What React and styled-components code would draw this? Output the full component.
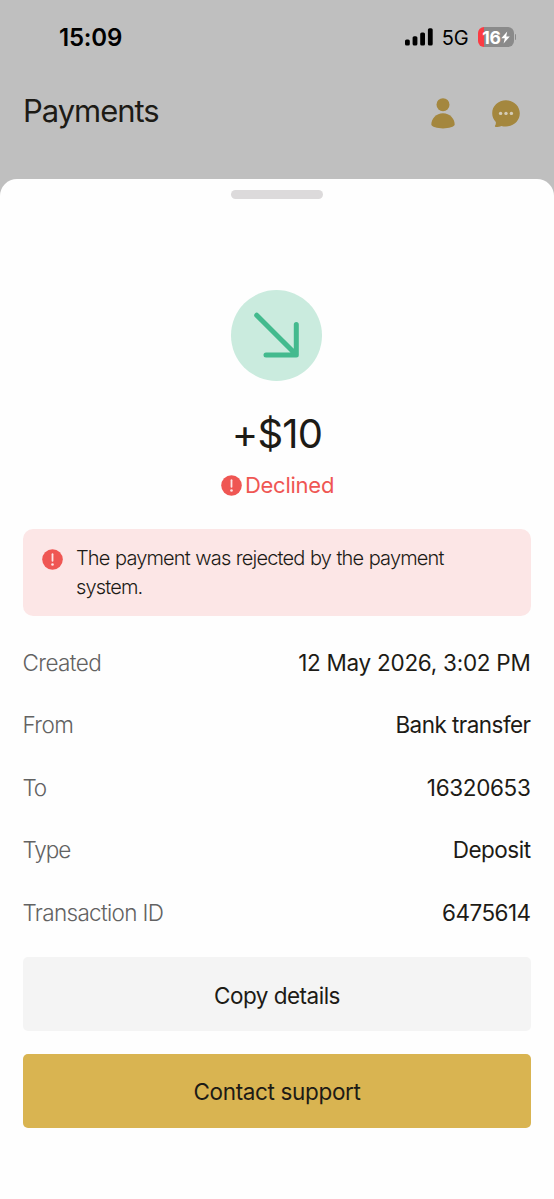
import React from "react";
import styled, { createGlobalStyle } from "styled-components";

const details = [
  { label: "Created", value: "12 May 2026, 3:02 PM", labelGap: -0.6, valueGap: -0.27 },
  { label: "From", value: "Bank transfer", labelGap: -0.6, valueGap: -0.55 },
  { label: "To", value: "16320653", labelGap: -1.2, valueGap: -0.35 },
  { label: "Type", value: "Deposit", labelGap: -1.1, valueGap: -0.5 },
  { label: "Transaction ID", value: "6475614", labelGap: -0.68, valueGap: -0.55 },
];

const SignalIcon = () => (
  <svg width="28" height="18" viewBox="0 0 28 18" fill="#000">
    <rect x="0" y="11.5" width="4.8" height="6" rx="1.6" />
    <rect x="7.6" y="8.2" width="4.8" height="9.3" rx="1.6" />
    <rect x="15.2" y="4.4" width="4.8" height="13.1" rx="1.6" />
    <rect x="22.9" y="0.2" width="4.8" height="17.3" rx="1.6" />
  </svg>
);

const BoltIcon = () => (
  <svg width="9" height="13" viewBox="0 0 9 13" fill="#fff">
    <path d="M6.2 0.4L0.3 7.2H3.8L2.6 12.6L8.8 5.4H5.2L6.2 0.4Z" />
  </svg>
);

const UserIcon = () => (
  <svg width="24" height="31" viewBox="0 0 24 31" fill="#a4873e">
    <circle cx="12" cy="6.7" r="6.5" />
    <path d="M12 15.2C5.2 15.2 0.3 20.6 0.3 26.6C0.3 29 6.4 30.4 12 30.4C17.6 30.4 23.7 29 23.7 26.6C23.7 20.6 18.8 15.2 12 15.2Z" />
  </svg>
);

const ChatIcon = () => (
  <svg width="28" height="28" viewBox="0 0 28 28">
    <path
      fill="#a4873e"
      d="M14 0.3C6.3 0.3 0.2 6 0.2 13.2C0.2 16.6 1.5 19.6 3.8 21.9C4.1 23.4 3.7 24.7 3 25.8C2.7 26.4 3.1 27 3.8 27C6 27 7.8 26.7 9.3 25.9C10.8 26.3 12.3 26.4 14 26.4C21.8 26.4 27.8 20.6 27.8 13.3C27.8 6 21.7 0.3 14 0.3Z"
    />
    <g fill="#d5cdb8">
      <circle cx="8.6" cy="13.4" r="1.7" />
      <circle cx="14" cy="13.4" r="1.7" />
      <circle cx="19.4" cy="13.4" r="1.7" />
    </g>
  </svg>
);

const ArrowIcon = () => (
  <svg width="91" height="91" viewBox="0 0 91 91" fill="none">
    <path
      d="M25.7 25.2L65 64.6M65.3 34.4V65H35"
      stroke="#43ba8e"
      strokeWidth="5"
      strokeLinecap="round"
      strokeLinejoin="round"
    />
  </svg>
);

const ErrorIcon = () => (
  <svg width="21" height="21" viewBox="0 0 21 21">
    <circle cx="10.5" cy="10.5" r="10.3" fill="#ef5653" />
    <path d="M10.5 5.2V11.8" stroke="#fde6e6" strokeWidth="1.8" strokeLinecap="round" />
    <circle cx="10.5" cy="15.5" r="1.3" fill="#fde6e6" />
  </svg>
);

export default function App() {
  return (
    <Screen>
      <GlobalStyle />
      <StatusBar>
        <Time>15:09</Time>
        <StatusRight>
          <SignalIcon />
          <Network>5G</Network>
          <BatteryWrapper>
            <Battery>
              <span>16</span>
              <BoltIcon />
            </Battery>
            <BatteryCap />
          </BatteryWrapper>
        </StatusRight>
      </StatusBar>
      <Header>
        <Title>Payments</Title>
        <HeaderIcons>
          <UserIcon />
          <ChatIcon />
        </HeaderIcons>
      </Header>
      <Sheet>
        <Handle />
        <ArrowCircle>
          <ArrowIcon />
        </ArrowCircle>
        <Amount>+$10</Amount>
        <Status>
          <ErrorIcon />
          <span>Declined</span>
        </Status>
        <Alert>
          <ErrorIcon />
          <AlertText>The payment was rejected by the payment system.</AlertText>
        </Alert>
        <DetailList>
          {details.map((item) => (
            <DetailRow key={item.label}>
              <DetailLabel $gap={item.labelGap}>{item.label}</DetailLabel>
              <DetailValue $gap={item.valueGap}>{item.value}</DetailValue>
            </DetailRow>
          ))}
        </DetailList>
        <Buttons>
          <Button $gap={-0.5}>Copy details</Button>
          <Button $primary $gap={-0.35}>
            Contact support
          </Button>
        </Buttons>
      </Sheet>
    </Screen>
  );
}

const GlobalStyle = createGlobalStyle`
  * {
    box-sizing: border-box;
  }
  body {
    margin: 0;
    font-family: Inter, "Liberation Sans", sans-serif;
    color: #1d1b16;
    background-color: #bfbfbf;
  }
  svg {
    display: block;
    flex-shrink: 0;
  }
`;

const Screen = styled.div`
  display: flex;
  flex-direction: column;
  width: 554px;
  height: 1199px;
  overflow: hidden;
  background-color: #bfbfbf;
`;

const StatusBar = styled.div`
  display: flex;
  justify-content: space-between;
  align-items: center;
  height: 74px;
  padding: 0 38px 0 59px;
`;

const Time = styled.span`
  padding-top: 2px;
  font-size: 24px;
  font-weight: 600;
  line-height: 30px;
  letter-spacing: -0.2px;
  color: #000;
`;

const StatusRight = styled.div`
  display: flex;
  align-items: center;
`;

const Network = styled.span`
  margin: 1px 9px 0 9px;
  font-size: 20px;
  line-height: 24px;
  letter-spacing: -0.2px;
  color: #000;
`;

const BatteryWrapper = styled.div`
  display: flex;
  align-items: center;
  gap: 1px;
`;

const Battery = styled.div`
  display: flex;
  justify-content: center;
  align-items: center;
  width: 36px;
  height: 20px;
  padding-left: 1px;
  border-radius: 6px;
  background: linear-gradient(to right, #fb3b43 6px, #8a8a8a 6px);
  color: white;
  font-size: 17.5px;
  font-weight: 700;
  letter-spacing: -0.2px;
`;

const BatteryCap = styled.div`
  width: 1.5px;
  height: 6px;
  border-radius: 0 2px 2px 0;
  background-color: #8a8a8a;
`;

const Header = styled.header`
  display: flex;
  justify-content: space-between;
  height: 105px;
  padding: 17px 34px 0 23px;
`;

const Title = styled.h1`
  margin: 0;
  font-size: 31px;
  font-weight: 400;
  line-height: 40px;
  letter-spacing: -1.05px;
`;

const HeaderIcons = styled.div`
  display: flex;
  align-items: center;
  gap: 37px;
  height: 45px;
`;

const Sheet = styled.section`
  display: flex;
  flex-direction: column;
  align-items: center;
  flex: 1;
  padding: 11px 23px 0;
  border-radius: 17px 17px 0 0;
  background-color: #fefefe;
`;

const Handle = styled.div`
  width: 92px;
  height: 9px;
  border-radius: 5px;
  background-color: #dcdadb;
`;

const ArrowCircle = styled.div`
  width: 91px;
  height: 91px;
  margin-top: 91px;
  margin-right: 1px;
  border-radius: 50%;
  background-color: #caebde;
`;

const Amount = styled.div`
  margin-top: 29px;
  font-size: 40px;
  line-height: 48px;
  letter-spacing: -0.8px;
`;

const Status = styled.div`
  display: flex;
  align-items: center;
  gap: 3px;
  margin-top: 13px;
  padding-left: 1px;
  font-size: 22px;
  line-height: 28px;
  letter-spacing: -0.25px;
  color: #ef5653;
`;

const Alert = styled.div`
  display: flex;
  gap: 13px;
  width: 100%;
  height: 87px;
  margin-top: 30px;
  padding: 15px 19px;
  border-radius: 10px;
  background-color: #fce6e6;
  & > svg {
    margin-top: 5px;
  }
`;

const AlertText = styled.p`
  width: 380px;
  margin: 0;
  font-size: 20px;
  font-weight: 350;
  line-height: 28.5px;
  letter-spacing: -0.85px;
  word-spacing: 0.7px;
`;

const DetailList = styled.div`
  width: 100%;
  margin-top: 15px;
`;

const DetailRow = styled.div`
  display: flex;
  justify-content: space-between;
  align-items: center;
  height: 62.5px;
  font-size: 22.5px;
`;

const DetailLabel = styled.span`
  margin-left: -0.5px;
  font-weight: 350;
  letter-spacing: ${({ $gap }) => $gap}px;
  color: #626262;
`;

const DetailValue = styled.span`
  margin-right: 0.5px;
  letter-spacing: ${({ $gap }) => $gap}px;
`;

const Buttons = styled.div`
  display: flex;
  flex-direction: column;
  gap: 22.5px;
  width: 100%;
  margin-top: 13.5px;
`;

const Button = styled.button`
  height: 74px;
  padding: 2px 0 0;
  border: none;
  border-radius: 5px;
  background-color: ${({ $primary }) => ($primary ? "#d9b451" : "#f4f4f4")};
  color: #1d1b16;
  font-family: inherit;
  font-size: 22.5px;
  letter-spacing: ${({ $gap }) => $gap}px;
  cursor: pointer;
`;
